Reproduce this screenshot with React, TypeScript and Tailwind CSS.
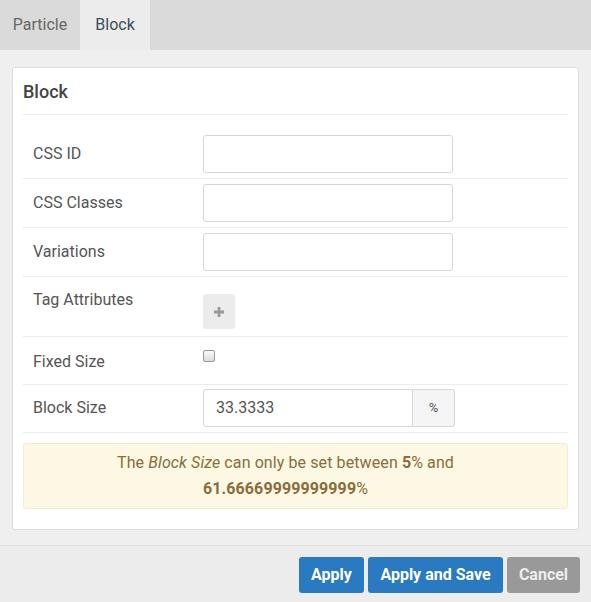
import React from "react";

function Row({ label, children, className = "", labelClass = "" }: { label: string; children: React.ReactNode; className?: string; labelClass?: string }) {
  return (
    <div className={`flex border-b border-[#ececec] ${className}`}>
      <div className={`w-[180px] pl-[10px] text-[16px] text-[#555] ${labelClass}`}>{label}</div>
      <div className="flex-1">{children}</div>
    </div>
  );
}

function TextInput() {
  return <div className="h-[38px] w-[250px] rounded-[3px] border border-[#d6d6d6] bg-white" />;
}

export default function App() {
  return (
    <div className="w-[591px] h-[602px] flex flex-col bg-[#efefef]" style={{ fontFamily: "Roboto, 'Liberation Sans', sans-serif" }}>
      <div className="flex h-[50px] bg-[#dadada] text-[16px] shrink-0">
        <div className="w-[80px] flex items-center justify-center text-[#666]">Particle</div>
        <div className="w-[70px] flex items-center justify-center bg-[#ececec] text-[#3a4d5c]">Block</div>
      </div>
      <div className="flex-1 px-[12px] pt-[17px]">
        <div className="bg-white border border-[#dcdcdc] rounded-[3px] px-[10px] pb-[20px]">
          <div className="h-[47px] border-b border-[#ececec] flex items-center text-[18px] font-medium text-[#444]">Block</div>
          <Row label="CSS ID" className="pt-[20px] pb-[5px] items-center">
            <TextInput />
          </Row>
          <Row label="CSS Classes" className="py-[5px] items-center">
            <TextInput />
          </Row>
          <Row label="Variations" className="py-[5px] items-center">
            <TextInput />
          </Row>
          <Row label="Tag Attributes" className="pt-[17px] pb-[7px]" labelClass="-mt-[6px]">
            <div className="w-[32px] h-[35px] rounded-[3px] bg-[#ececec] flex items-center justify-center">
              <svg width="10" height="10" viewBox="0 0 10 10">
                <path d="M3.6 0h2.8v3.6H10v2.8H6.4V10H3.6V6.4H0V3.6h3.6z" fill="#9a9a9a" />
              </svg>
            </div>
          </Row>
          <Row label="Fixed Size" className="pt-[13px] pb-[10px]">
            <div className="w-[12px] h-[12px] rounded-[2px] border border-[#999] bg-gradient-to-b from-[#fafafa] to-[#dcdcdc]" />
          </Row>
          <Row label="Block Size" className="pt-[4px] pb-[5px] items-center">
            <div className="flex h-[38px] w-[252px]">
              <div className="flex-1 rounded-l-[3px] border border-[#d6d6d6] flex items-center pl-[12px] text-[16px] text-[#555]">33.3333</div>
              <div className="w-[42px] rounded-r-[3px] border border-l-0 border-[#d6d6d6] bg-[#f5f5f5] flex items-center justify-center text-[13px] text-[#555]">%</div>
            </div>
          </Row>
          <div className="mt-[10px] h-[66px] pl-[15px] pr-[35px] rounded-[3px] border border-[#f7eccf] bg-[#fcf8e3] text-[#8a6d3b] text-[16px] leading-[26px] flex flex-col items-center justify-center text-center">
            <div className="tracking-[0.1px]">
              The <i>Block Size</i> can only be set between <b>5</b>% and
            </div>
            <div className="tracking-[0.1px]">
              <b>61.66669999999999</b>%
            </div>
          </div>
        </div>
      </div>
      <div className="h-[57px] shrink-0 border-t border-[#dedede] bg-[#ececec] flex items-start justify-end pr-[11px] pt-[11px] gap-[4px]">
        <button className="h-[36px] w-[65px] rounded-[3px] bg-[#2a7ac1] text-white text-[16px] font-bold">Apply</button>
        <button className="h-[36px] w-[135px] rounded-[3px] bg-[#2a7ac1] text-white text-[16px] font-bold">Apply and Save</button>
        <button className="h-[36px] w-[73px] rounded-[3px] bg-[#999] text-[#eee] text-[16px] font-bold">Cancel</button>
      </div>
    </div>
  );
}
